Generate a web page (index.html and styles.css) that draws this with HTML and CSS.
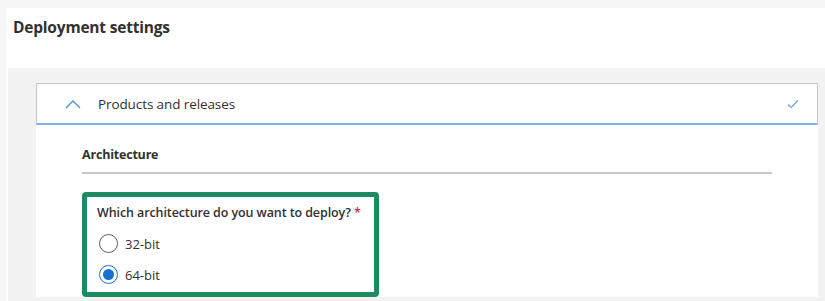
FILE: index.html
```html
<!DOCTYPE html>
<html lang="en">
<head>
    <meta charset="UTF-8">
    <title>Deployment settings</title>
    <link rel="stylesheet" href="styles.css">
</head>
<body>
    <div class="panel">
        <h1 class="title">Deployment settings</h1>
        <div class="band">
            <div class="section">
                <div class="acc__header">
                    <svg class="acc__chevron" width="16" height="10" viewBox="0 0 16 10">
                        <path d="M1 9 L8 2 L15 9" fill="none" stroke="#4f8fd6" stroke-width="1.3"/>
                    </svg>
                    <span class="acc__title">Products and releases</span>
                    <svg class="acc__check" width="12" height="10" viewBox="0 0 12 10">
                        <path d="M1 5.5 L4.2 8.5 L11 1.5" fill="none" stroke="#6d9fd8" stroke-width="1.2"/>
                    </svg>
                </div>
                <div class="acc__body">
                    <h2 class="subtitle">Architecture</h2>
                    <div class="highlight">
                        <div class="question">Which architecture do you want to deploy? <span class="req">*</span></div>
                        <label class="radio">
                            <span class="radio__ring"></span>
                            <span>32-bit</span>
                        </label>
                        <label class="radio">
                            <span class="radio__ring radio__ring--on"></span>
                            <span>64-bit</span>
                        </label>
                    </div>
                </div>
            </div>
        </div>
    </div>
</body>
</html>
```

FILE: styles.css
```css
* {
    box-sizing: border-box;
}
html, body {
    margin: 0;
    padding: 0;
}
body {
    background: #f6f6f6;
    font-family: "Open Sans", "Noto Sans", sans-serif;
    color: #323130;
    height: 301px;
    overflow: hidden;
}
.panel {
    margin: 8px 0 0 6px;
    background: #fff;
    height: 293px;
    display: flex;
    flex-direction: column;
}
.title {
    margin: 0;
    height: 61px;
    padding: 8px 0 0 7px;
    font-size: 15.5px;
    font-weight: 700;
    line-height: 22px;
    letter-spacing: -0.2px;
}
.band {
    flex: 1;
    margin-left: 2px;
    background: #f2f2f2;
    padding: 15px 7px 4px 28px;
    display: flex;
}
.section {
    flex: 1;
    background: #fff;
    display: flex;
    flex-direction: column;
}
.acc__header {
    height: 42px;
    border: 1px solid #c8c6c4;
    border-bottom: 2px solid #86b4e0;
    display: flex;
    align-items: center;
    padding: 0 18px 0 28px;
}
.acc__chevron {
    margin-right: 17px;
}
.acc__title {
    flex: 1;
    font-size: 13.5px;
    letter-spacing: -0.1px;
}
.acc__body {
    flex: 1;
    padding: 21px 46px 0 46px;
}
.subtitle {
    margin: 0;
    font-size: 12.5px;
    font-weight: 700;
    line-height: 18px;
    padding-bottom: 8px;
    border-bottom: 2px solid #c9c9c9;
    letter-spacing: -0.2px;
}
.highlight {
    margin-top: 18px;
    width: 297px;
    height: 105px;
    border: 5px solid #1d8a62;
    border-radius: 4px;
    padding: 7px 0 0 10px;
}
.question {
    font-size: 12.5px;
    font-weight: 600;
    line-height: 18px;
    margin-bottom: 6px;
    letter-spacing: -0.1px;
}
.req {
    color: #c4314b;
}
.radio {
    display: flex;
    align-items: center;
    height: 31px;
    font-size: 13px;
    padding-left: 2px;
}
.radio__ring {
    width: 19px;
    height: 19px;
    border-radius: 50%;
    border: 1.5px solid #5f5d5b;
    margin-right: 7px;
    display: flex;
    align-items: center;
    justify-content: center;
}
.radio__ring--on {
    border-color: #1570d0;
}
.radio__ring--on::after {
    content: "";
    width: 11px;
    height: 11px;
    border-radius: 50%;
    background: #1570d0;
}
```
